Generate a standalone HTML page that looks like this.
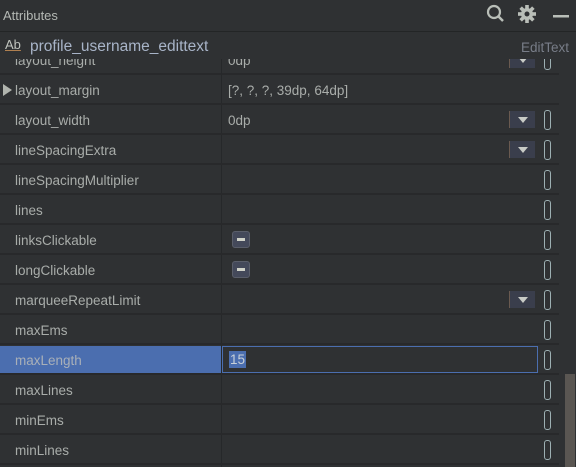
<!DOCTYPE html><html><head><style>
body{margin:0;width:576px;height:467px;background:#2f3133;overflow:hidden;font-family:"Liberation Sans","DejaVu Sans",sans-serif;color:#a9adaa;position:relative}
.t{position:absolute;left:3px;top:8px;font-size:13px;color:#b4b8b4}
.hl{position:absolute;left:0;top:31px;width:576px;height:1px;background:#232526;z-index:3}
.row{position:absolute;left:0;width:559px;height:28px;border-bottom:2px solid #28292b;font-size:13.5px}
.row .n{position:absolute;left:15px;top:8px}
.row .v{position:absolute;left:228px;top:8px}
.col{position:absolute;left:221px;top:45px;width:1px;height:422px;background:#26282a}
.z{position:absolute;left:544px;top:5px;width:5px;height:18px;border:1px solid #9db0b3;border-radius:3px}
.dd{position:absolute;left:509px;top:6px;width:25px;height:17px;background:#3a3e4c;border-left:1px solid #6a5a50}
.dd:after{content:"";position:absolute;left:8px;top:6px;border:5px solid transparent;border-top:6px solid #c8cbc6;border-bottom:0}
.cb{position:absolute;left:232px;top:6px;width:16px;height:15px;background:#44495a;border:1px solid #5a5e6a;border-radius:3px}
.cb:after{content:"";position:absolute;left:4px;top:6px;width:8px;height:3px;background:#d0d2c8}
</style></head><body>
<div class="row" style="top:45px"><span class="n">layout_height</span><span class="v">0dp</span><div class="dd"></div><div class="z"></div></div>
<div class="col"></div>
<div style="position:absolute;left:0;top:0;width:576px;height:59px;background:#2f3133;z-index:2"></div>
<div class="t" style="z-index:3">Attributes</div>
<svg style="position:absolute;left:485px;top:4px;z-index:3" width="90" height="20">
<circle cx="9" cy="8" r="6" fill="none" stroke="#b9beb8" stroke-width="2.2"/><line x1="13" y1="12" x2="18" y2="17" stroke="#b9beb8" stroke-width="2.5"/>
<g transform="translate(42,10)" fill="#b9beb8"><circle r="6"/><rect x="-1.8" y="-9" width="3.6" height="18"/><rect x="-9" y="-1.8" width="18" height="3.6"/><rect x="-1.8" y="-9" width="3.6" height="18" transform="rotate(45)"/><rect x="-1.8" y="-9" width="3.6" height="18" transform="rotate(-45)"/><circle r="2.5" fill="#2f3133"/></g>
<rect x="68" y="11" width="16" height="2.5" fill="#b9beb8"/></svg>
<div class="hl"></div>
<div style="position:absolute;left:5px;top:37px;font-size:13px;color:#c0c4be;text-decoration:underline;text-decoration-color:#b08050;z-index:3">Ab</div>
<div style="position:absolute;left:30px;top:38px;font-size:15.5px;color:#a8b4c8;z-index:3">profile_username_edittext</div>
<div style="position:absolute;right:7px;top:40px;font-size:13.5px;color:#787d88;z-index:3">EditText</div>
<div class="row" style="top:75px"><span style="position:absolute;left:3px;top:9px;border-left:9px solid #b0b4ae;border-top:6px solid transparent;border-bottom:6px solid transparent"></span><span class="n">layout_margin</span><span class="v">[?, ?, ?, 39dp, 64dp]</span></div>
<div class="row" style="top:105px"><span class="n">layout_width</span><span class="v">0dp</span><div class="dd"></div><div class="z"></div></div>
<div class="row" style="top:135px"><span class="n">lineSpacingExtra</span><div class="dd"></div><div class="z"></div></div>
<div class="row" style="top:165px"><span class="n">lineSpacingMultiplier</span><div class="z"></div></div>
<div class="row" style="top:195px"><span class="n">lines</span><div class="z"></div></div>
<div class="row" style="top:225px"><span class="n">linksClickable</span><div class="cb"></div><div class="z"></div></div>
<div class="row" style="top:255px"><span class="n">longClickable</span><div class="cb"></div><div class="z"></div></div>
<div class="row" style="top:285px"><span class="n">marqueeRepeatLimit</span><div class="dd"></div><div class="z"></div></div>
<div class="row" style="top:315px"><span class="n">maxEms</span><div class="z"></div></div>
<div class="row" style="top:345px"><div style="position:absolute;left:0;top:1px;width:221px;height:27px;background:#4b6eaf"></div><span class="n" style="color:#a9b0b8">maxLength</span><div style="position:absolute;left:222px;top:1px;width:314px;height:25px;border:1px solid #4b6eaf"></div><span style="position:absolute;left:229px;top:6px;background:#4b6eaf;color:#c8d0d8;padding:1px 1px">15</span><div class="z"></div></div>
<div class="row" style="top:375px"><span class="n">maxLines</span><div class="z"></div></div>
<div class="row" style="top:405px"><span class="n">minEms</span><div class="z"></div></div>
<div class="row" style="top:435px"><span class="n">minLines</span><div class="z"></div></div>
<div style="position:absolute;left:565px;top:374px;width:10px;height:93px;background:#5a5652"></div>
</body></html>
